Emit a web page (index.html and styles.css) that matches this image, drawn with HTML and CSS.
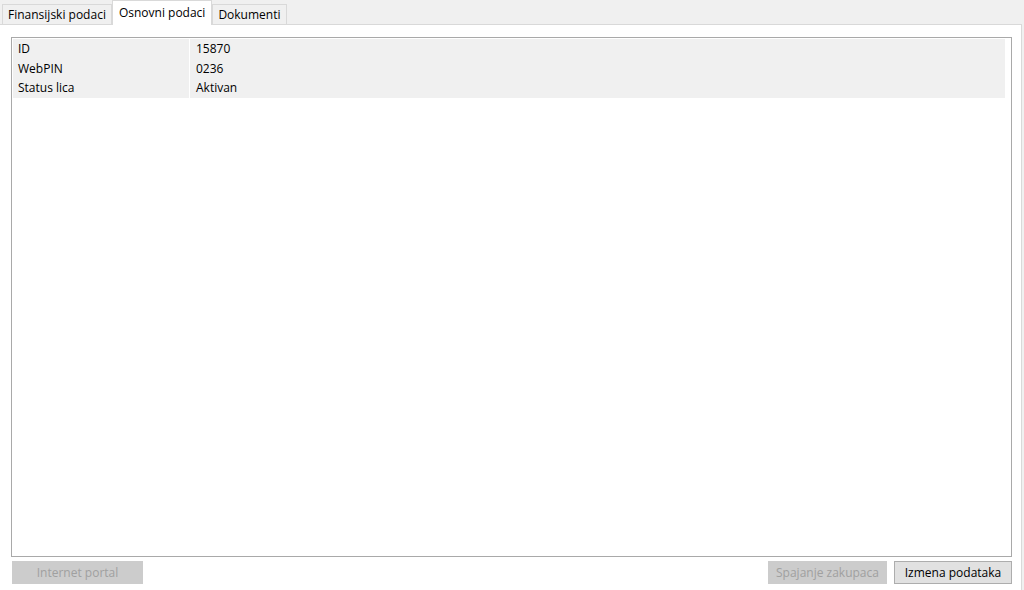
FILE: index.html
```html
<!DOCTYPE html>
<html>
<head>
<meta charset="utf-8">
<link rel="stylesheet" href="styles.css">
</head>
<body>
<div class="window">
  <div class="tabs">
    <div class="tab">Finansijski podaci</div>
    <div class="tab active">Osnovni podaci</div>
    <div class="tab">Dokumenti</div>
  </div>
  <div class="panel">
    <div class="box">
      <div class="grid">
        <div class="row"><div class="key">ID</div><div class="val">15870</div></div>
        <div class="row"><div class="key">WebPIN</div><div class="val">0236</div></div>
        <div class="row"><div class="key">Status lica</div><div class="val">Aktivan</div></div>
      </div>
    </div>
    <div class="buttons">
      <button class="btn disabled wide">Internet portal</button>
      <div class="spacer"></div>
      <button class="btn disabled">Spajanje zakupaca</button>
      <button class="btn">Izmena podataka</button>
    </div>
  </div>
</div>
</body>
</html>
```
FILE: styles.css
```css
html, body {
  margin: 0;
  padding: 0;
  background: #f0f0f0;
  font-family: "Open Sans", "Noto Sans", sans-serif;
  font-size: 12px;
  color: #000;
}
.window {
  width: 1024px;
  height: 590px;
  display: flex;
  flex-direction: column;
}
.tabs {
  display: flex;
  height: 24px;
  padding-left: 2px;
  align-items: flex-end;
}
.tab {
  height: 20px;
  line-height: 19px;
  padding: 0 5px;
  box-sizing: border-box;
  border: 1px solid #d9d9d9;
  border-bottom: none;
  background: #f0f0f0;
  white-space: nowrap;
}
.tab.active {
  height: 25px;
  line-height: 23px;
  background: #fff;
  padding: 0 6px;
  position: relative;
  z-index: 1;
  margin-bottom: -1px;
}
.panel {
  width: 1022px;
  box-sizing: border-box;
  flex: 1;
  background: #fff;
  border-top: 1px solid #d9d9d9;
  border-right: 1px solid #d9d9d9;
  padding: 12px 9px 0 11px;
  display: flex;
  flex-direction: column;
}
.box {
  height: 520px;
  box-sizing: border-box;
  border: 1px solid #a9a9a9;
  padding: 1px 6px 0 1px;
  background: #fff;
}
.grid {
  display: flex;
  flex-direction: column;
}
.row {
  display: flex;
  height: 19.5px;
  background: #f0f0f0;
}
.key {
  width: 171px;
  padding-left: 5px;
  line-height: 19px;
  border-right: 1px solid #fff;
}
.val {
  padding-left: 6px;
  line-height: 19px;
}
.buttons {
  display: flex;
  margin-top: 4px;
  gap: 7px;
  padding-left: 1px;
}
.spacer { flex: 1; }
.btn {
  height: 23px;
  font-family: inherit;
  font-size: 12px;
  padding: 0;
  white-space: nowrap;
  background: #e1e1e1;
  border: 1px solid #adadad;
  color: #000;
  width: 118px;
  box-sizing: border-box;
}
.btn.disabled {
  background: #cccccc;
  border-color: #cccccc;
  color: #a0a0a0;
  width: 119px;
}
.btn.wide { width: 131px; }
```
